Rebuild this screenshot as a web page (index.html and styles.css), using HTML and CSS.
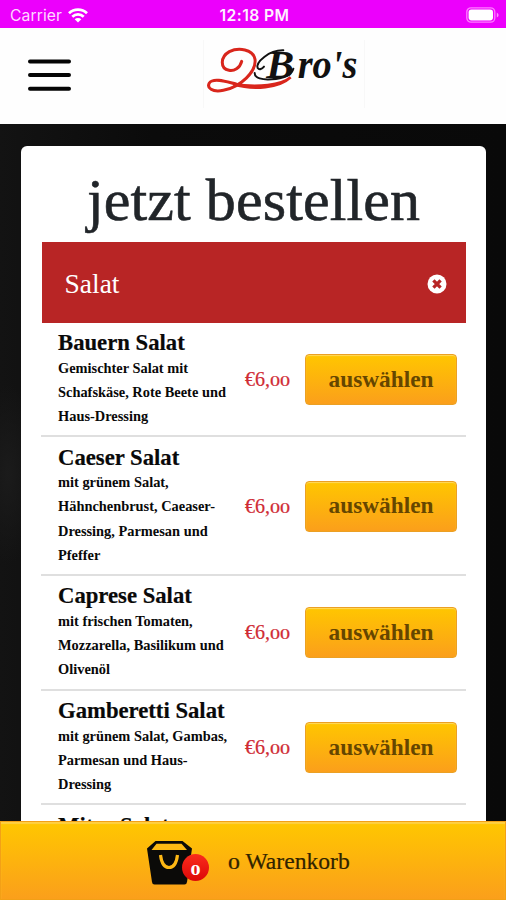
FILE: index.html
```html
<!DOCTYPE html>
<html lang="de">
<head>
<meta charset="utf-8">
<title>2Bro's</title>
<link rel="stylesheet" href="styles.css">
</head>
<body>
<div class="app">
  <div class="status">
    <div class="carrier">Carrier
      <svg class="wifi" viewBox="0 0 20 15"><g fill="none" stroke="#fff" stroke-width="2.7"><path d="M1 5.3a12.8 12.8 0 0 1 18 0"/><path d="M4.3 8.8a8.1 8.1 0 0 1 11.4 0"/></g><path d="M10 14.6 6.7 11.3a4.7 4.7 0 0 1 6.6 0z" fill="#fff"/></svg>
    </div>
    <div class="time">12:18 PM</div>
    <svg class="battery" viewBox="0 0 33 16"><rect x=".8" y=".8" width="28" height="14.4" rx="4.2" fill="none" stroke="#ff7cff" stroke-width="1.3"/><rect x="2.6" y="2.6" width="24.4" height="10.8" rx="2.8" fill="#fff"/><path d="M30.8 5.5q1.8 1 1.8 2.5t-1.8 2.5z" fill="#ff8cff"/></svg>
  </div>
  <header class="header">
    <svg class="menu" viewBox="0 0 43 33"><path d="M2 2.500h39M2 16h39M2 29.700h39" stroke="#050505" stroke-width="4" stroke-linecap="round"/></svg>
    <div class="logo">
      <svg viewBox="609 120 486 204">
        <g fill="none" stroke="#d9261c" stroke-linecap="round">
          <path d="M725 184C720 204 702 214 687 211C660 206 660 171 688 155C715 142 760 147 765 178C770 214 722 261 670 271C636 278 620 263 628 249C640 231 683 246 708 252" stroke-width="9"/>
          <path d="M700 253C760 272 838 264 872 232C844 256 775 263 700 253Z" stroke-width="8"/>
        </g>
        <g fill="none" stroke="#111" stroke-linecap="round">
          <path d="M850 151C806 150 767 187 773 204C778 211 786 207 792 200" stroke-width="6"/>
          <path d="M764 219C764 235 787 240 815 238C850 236 876 224 880 206" stroke-width="6"/>
        </g>
        <text x="799" y="235" textLength="84" lengthAdjust="spacingAndGlyphs" class="logo-text">B</text>
        <text x="893" y="235" textLength="179" lengthAdjust="spacingAndGlyphs" class="logo-text">ro's</text>
      </svg>
    </div>
  </header>
  <main class="stage">
    <section class="card">
      <h1>jetzt bestellen</h1>
      <div class="category"><span>Salat</span>
        <svg viewBox="0 0 20 20"><circle cx="10" cy="10" r="9.500" fill="#fff"/><path d="m6.400 6.400 7.200 7.200m0-7.200-7.200 7.200" stroke="#b82525" stroke-width="3.300"/></svg>
      </div>
      <article class="item">
        <div class="info"><h2>Bauern Salat</h2><p>Gemischter Salat mit<br>Schafskäse, Rote Beete und<br>Haus-Dressing</p></div>
        <div class="price">€6,<span class="low">00</span></div><button>auswählen</button>
      </article>
      <article class="item">
        <div class="info"><h2>Caeser Salat</h2><p>mit grünem Salat,<br>Hähnchenbrust, Caeaser-<br>Dressing, Parmesan und<br>Pfeffer</p></div>
        <div class="price">€6,<span class="low">00</span></div><button>auswählen</button>
      </article>
      <article class="item">
        <div class="info"><h2>Caprese Salat</h2><p>mit frischen Tomaten,<br>Mozzarella, Basilikum und<br>Olivenöl</p></div>
        <div class="price">€6,<span class="low">00</span></div><button>auswählen</button>
      </article>
      <article class="item">
        <div class="info"><h2>Gamberetti Salat</h2><p>mit grünem Salat, Gambas,<br>Parmesan und Haus-<br>Dressing</p></div>
        <div class="price">€6,<span class="low">00</span></div><button>auswählen</button>
      </article>
      <article class="item">
        <div class="info"><h2>Mitro Salat</h2></div>
      </article>
    </section>
  </main>
  <footer class="cart">
    <div class="bag">
      <svg viewBox="0 0 46 44"><path d="M8.500 0h27L45 7.500 40 41q-.4 2.500-2.500 2.500h-30Q5.300 43.500 5 41L0 7.500z" fill="#0b0a08"/><path d="M9.500 2.700h25L40 9H4.500z" fill="#fdb913"/><path d="M13.500 14C14.500 22 17 26.500 22 26.500S29.500 22 30.500 14" fill="none" stroke="#fdb714" stroke-width="3.200"/></svg>
      <span class="badge"><span class="low">0</span></span>
    </div>
    <div class="cart-label"><span class="low">0</span> Warenkorb</div>
  </footer>
</div>
</body>
</html>
```
FILE: styles.css
```css
* { box-sizing: border-box; }
body { margin: 0; background: #fff; font-family: "Liberation Serif", serif; overflow: hidden; }
.app { width: 506px; height: 900px; display: flex; flex-direction: column; overflow: hidden; }
.status { height: 28px; flex: none; background: #ec00fc; color: #fff; display: grid; grid-template-columns: 1fr auto 1fr; align-items: center; padding: 2px 7px 0 10px; font: 15.700px Inter, sans-serif; }
.carrier { display: flex; align-items: center; gap: 6px; color: #ffd9ff; letter-spacing: .1px; }
.wifi { width: 20px; height: 15px; }
.time { font-weight: 600; letter-spacing: .4px; color: #fff0ff; }
.battery { width: 33px; height: 16px; justify-self: end; }
.header { height: 96px; flex: none; background: #fefefe; display: flex; align-items: flex-start; padding-left: 28px; }
.menu { width: 43px; height: 33px; margin-top: 31px; }
.logo { margin: 12px 0 0 132px; width: 162px; height: 68px; border: solid #f8f8f8; border-width: 0 1px; }
.logo svg { display: block; width: 162px; height: 68px; margin-left: -1px; }
.logo-text { font: italic bold 122px "Liberation Serif", serif; fill: #111; }
.stage { flex: 1; min-height: 0; overflow: hidden; padding: 22px 20px 0 21px; background: radial-gradient(ellipse 30px 90px at 8px 350px, #1b1b1b, transparent), linear-gradient(90deg, #131313, #0b0b0b 30%, #090909); }
.card { height: 800px; background: #fff; border-radius: 6px; padding: 20px 20px 0; }
h1 { margin: 0 -10px; height: 75.500px; line-height: 68px; text-align: center; font-size: 60px; font-weight: 400; letter-spacing: .1px; color: #212529; -webkit-text-stroke: .6px #212529; }
.category { height: 81px; margin-left: .5px; background: #b82525; color: #fff; display: flex; align-items: center; justify-content: space-between; padding: 4px 19px 0 23px; font-size: 27.500px; }
.category svg { width: 20px; height: 20px; }
.item { display: grid; grid-template-columns: 187px 60px 152px; align-items: center; padding: 7.500px 9px 7px 17px; border-bottom: 2px solid #dfdfdf; }
.info { white-space: nowrap; color: #090909; }
h2 { margin: 0; font-size: 22.700px; line-height: 25.500px; -webkit-text-stroke: .2px #090909; }
p { margin: 0; font-size: 14.400px; line-height: 24.200px; font-weight: 700; }
.price { color: #d02c35; font-size: 20px; line-height: 24px; padding-top: 2px; -webkit-text-stroke: .2px #d02c35; }
.low { display: inline-block; font-size: .72em; transform: scaleX(1.4); transform-origin: left; }
button { height: 51px; width: 152px; margin-top: 1px; padding: 0 0 1px; border: 1.500px solid #eba024; border-radius: 4px; background: linear-gradient(#ffc600, #fb9f1b); box-shadow: inset 0 1px 1px #ffd95c; color: #654600; font: bold 23.300px "Liberation Serif", serif; }
.cart { height: 79px; flex: none; display: flex; align-items: flex-start; padding: 19px 0 0 146px; border: 1px solid #f3a016; background: linear-gradient(#ffc700, #fb9f1b); box-shadow: inset 0 2px 1px #ffcf42; }
.bag { position: relative; width: 81px; height: 44px; }
.bag svg { display: block; width: 46px; height: 44px; }
.badge { position: absolute; left: 35px; top: 13px; width: 27px; height: 27px; border-radius: 50%; background: linear-gradient(#fa2c1c, #dc0808); color: #fff; text-align: center; font: bold 20px/28px "Liberation Serif", serif; }
.badge .low { transform-origin: center; }
.cart-label { font-size: 23.600px; line-height: 40px; color: #302300; white-space: nowrap; -webkit-text-stroke: .2px #302300; }
.cart-label .low { margin-right: 3.500px; }
```
